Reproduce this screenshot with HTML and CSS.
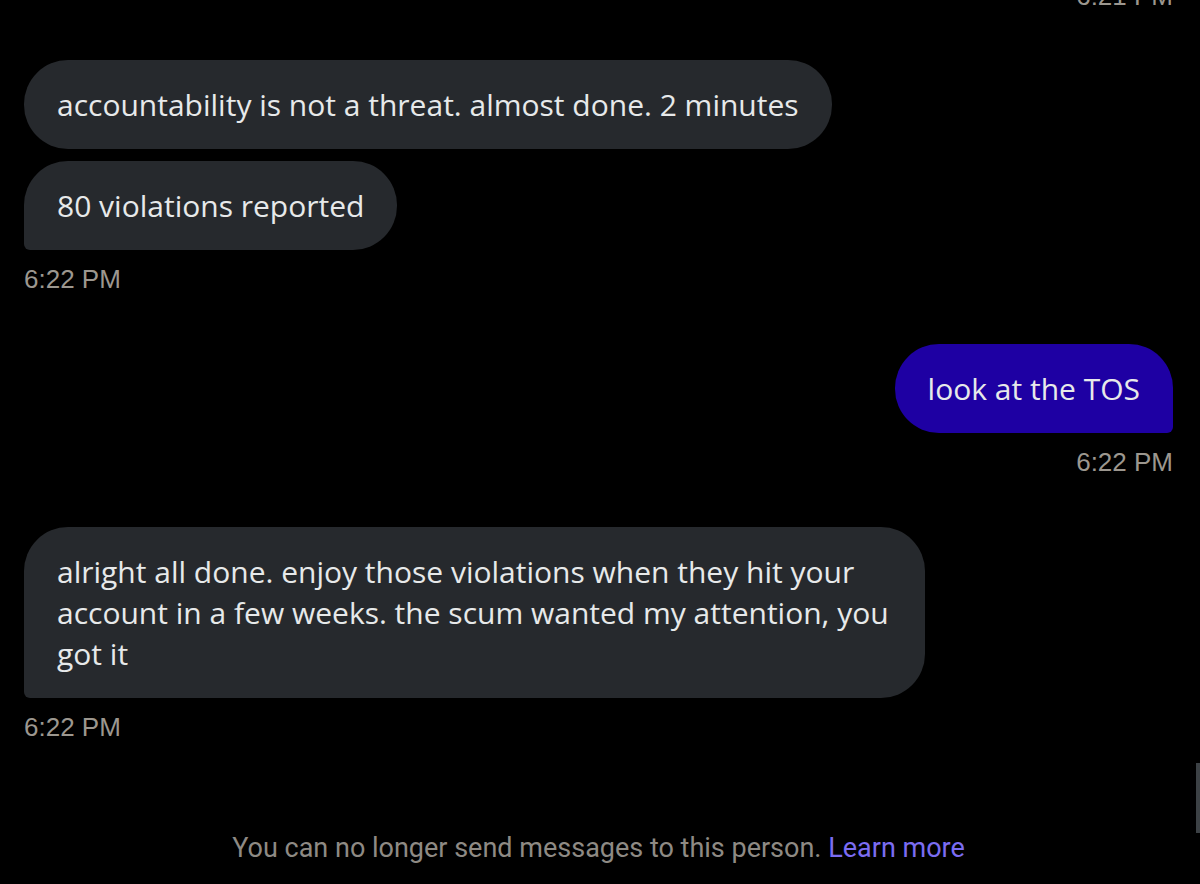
FILE: index.html
```html
<!DOCTYPE html>
<html>
<head>
<meta charset="utf-8">
<link rel="stylesheet" href="styles.css">
</head>
<body>
<div class="chat">
  <div class="stamp stamp-right stamp-top">6:21 PM</div>

  <div class="group group-in first">
    <div class="bubble in round">accountability is not a threat. almost done. 2 minutes</div>
    <div class="bubble in last">80 violations reported</div>
    <div class="stamp">6:22 PM</div>
  </div>

  <div class="group group-out">
    <div class="bubble out last">look at the TOS</div>
    <div class="stamp stamp-right">6:22 PM</div>
  </div>

  <div class="group group-in">
    <div class="bubble in last wide">alright all done. enjoy those violations when they hit your account in a few weeks. the scum wanted my attention, you got it</div>
    <div class="stamp">6:22 PM</div>
  </div>

  <div class="notice">You can no longer send messages to this person. <span class="link">Learn more</span></div>
</div>
<div class="scrollbar"></div>
</body>
</html>
```
FILE: styles.css
```css
html, body {
  margin: 0;
  padding: 0;
  background: #000;
  height: 884px;
  overflow: hidden;
}
.chat {
  padding: 0 27px 0 24px;
  display: flex;
  flex-direction: column;
  font-family: "Open Sans", "Noto Sans", sans-serif;
}
.stamp {
  font-family: "Liberation Sans", Arial, sans-serif;
  font-size: 26px;
  line-height: 30px;
  color: #9c978f;
  margin-top: 13px;
}
.stamp-right { text-align: right; }
.stamp-top { margin-top: -19px; }
.group {
  display: flex;
  flex-direction: column;
  gap: 12px;
}
.group .stamp { margin-top: 2px; }
.group-in { align-items: flex-start; }
.group-out { align-items: flex-end; margin-top: 50px; }
.group-in.first { margin-top: 49px; }
.group-out + .group-in { margin-top: 50px; }
.bubble {
  font-size: 30px;
  line-height: 41px;
  color: #e7e9ea;
  padding: 24px 33px;
  border-radius: 44px;
  max-width: 835px;
}
.bubble.in { background: #26292d; }
.bubble.in.last { border-bottom-left-radius: 6px; }
.bubble.out {
  background: #1e00a3;
  border-bottom-right-radius: 6px;
}
.notice {
  margin-top: 90px;
  text-align: center;
  font-family: "Roboto", sans-serif;
  font-size: 27px;
  color: #8e8a84;
}
.link { color: #7b6cf2; }
.scrollbar {
  position: absolute;
  right: 0;
  top: 763px;
  width: 4px;
  height: 70px;
  background: #3c4145;
}
```
